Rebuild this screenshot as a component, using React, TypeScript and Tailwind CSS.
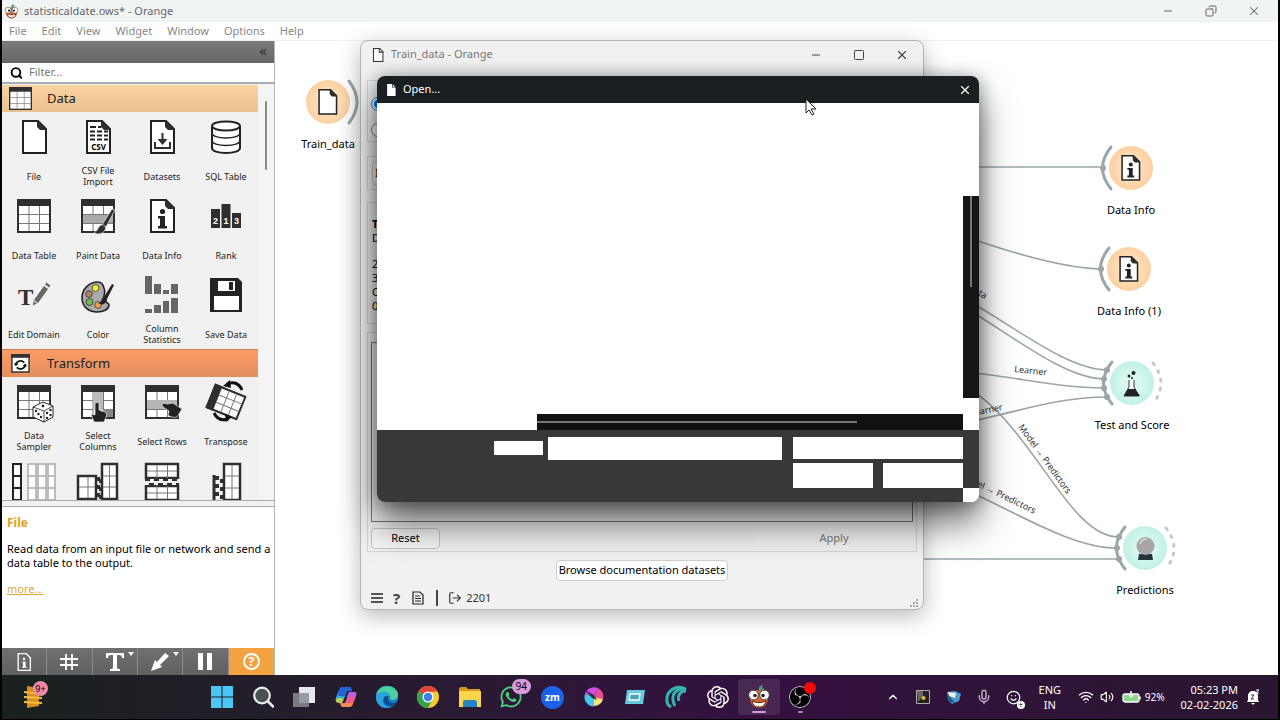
import type { ReactNode } from "react";
import { FaWhatsapp } from "react-icons/fa";
import { SiObsstudio, SiOpenai } from "react-icons/si";
import {
  ChevronUp,
  Copy,
  LogOut,
  Mic,
  Minus,
  Search,
  Smile,
  Square,
  Volume2,
  Wifi,
  X,
} from "lucide-react";

const INK = "#2f2f2f";

/* ---------- widget icons, drawn on a 34 x 34 grid ---------- */

function Icon34({ children }: { children: ReactNode }) {
  return (
    <svg viewBox="0 0 34 34" className="size-[34px] overflow-visible" aria-hidden="true">
      {children}
    </svg>
  );
}

function Page() {
  return (
    <>
      <path d="M6 1h15l8 8v24H6z" fill="#fff" stroke="#222" strokeWidth="2" />
      <path d="M20 0l10 10h-7l-3-3z" fill={INK} />
    </>
  );
}

function Table() {
  return (
    <>
      <rect x="1" y="1" width="32" height="32" fill="#fff" stroke={INK} strokeWidth="2" />
      <path d="M0 0h34v7H0z" fill={INK} />
      <path d="M2 15.5h30M2 24.5h30M12 7v25M22.500 7v25" stroke="#777" fill="none" />
    </>
  );
}

function Info() {
  return (
    <>
      <circle cx="17.500" cy="12.500" r="2.600" fill="#222" />
      <path d="M13 17h7v10h2v2.500h-9V27h2v-7.500h-2z" fill="#222" />
    </>
  );
}

function Brush() {
  return (
    <>
      <path d="M31 10l3 1-9 17-4-2z" fill={INK} stroke="#eee" strokeWidth="0.700" />
      <path d="M20 26c3-1 6 2 4 5-2 4-7 5-11 3 4-2 4-7 7-8z" fill={INK} stroke="#eee" strokeWidth="0.700" />
    </>
  );
}

const icons: Record<string, ReactNode> = {
  file: <Page />,
  csv: (
    <>
      <Page />
      <path
        d="M9 7h6M17 7h3M9 11.500h5M16 11.500h5M23 11.500h4M9 15.500h5M16 15.500h5M23 15.500h4M9 19.500h5M16 19.500h5M23 19.500h4"
        stroke="#222"
        strokeWidth="2"
      />
      <text x="17.500" y="30" textAnchor="middle" fontSize="8" fontWeight="bold" fontFamily="Noto Sans, sans-serif">
        CSV
      </text>
    </>
  ),
  datasets: (
    <>
      <Page />
      <path d="M17.500 13v9M10 22v6h15v-6" stroke={INK} strokeWidth="2" fill="none" />
      <path d="M12.500 19h10l-5 6z" fill={INK} />
    </>
  ),
  sql: (
    <g fill="#fff" stroke="#222" strokeWidth="2">
      <path d="M3 6v22c0 3 6 5 14 5s14-2 14-5V6" />
      <ellipse cx="17" cy="6" rx="14" ry="4.500" />
      <path d="M3 13c0 3 6 5 14 5s14-2 14-5M3 20.500c0 3 6 5 14 5s14-2 14-5" fill="none" strokeWidth="1.400" />
    </g>
  ),
  table: <Table />,
  paint: (
    <>
      <Table />
      <path d="M2 16h30v8H2z" fill="#aaa" />
      <Brush />
    </>
  ),
  info: (
    <>
      <Page />
      <Info />
    </>
  ),
  rank: (
    <>
      <path d="M2 10h9v19H2zM12.500 5h9v24h-9zM23 14h9v15h-9z" fill={INK} />
      <g fill="#fff" fontSize="9" fontWeight="bold" textAnchor="middle" fontFamily="Liberation Sans, sans-serif">
        <text x="6.500" y="25">2</text>
        <text x="17" y="25">1</text>
        <text x="27.500" y="25">3</text>
      </g>
    </>
  ),
  domain: (
    <>
      <text x="1" y="27" fontSize="23" fontWeight="bold" fill={INK} fontFamily="Liberation Serif, serif">
        T
      </text>
      <path d="M27 8l4 3-10 14-4-3zM28 6.500l1.500-2 4 3-1.500 2zM16.500 23l3.500 2.500-4 2z" fill="#666" />
    </>
  ),
  color: (
    <>
      <path
        d="M17 4C8 4 1 11 1 20s7 14 15 14c7 0 12-3 12-7 0-3-4-2-5-5-2-5 3-6 0-12-1-4-3-6-6-6z"
        fill="#aaa"
        stroke="#222"
        strokeWidth="1.600"
      />
      <g stroke="#333" strokeWidth="0.800">
        <circle cx="14.500" cy="10" r="3.500" fill="#eeee28" />
        <circle cx="8" cy="16" r="3.300" fill="#b98166" />
        <circle cx="8.500" cy="24" r="3.500" fill="#6abf45" />
        <circle cx="17" cy="27" r="3.300" fill="#f2a54c" />
      </g>
      <path d="M31 6l2 1-7 14-3-2zM23 19c3 0 4 3 2 5-2 3-5 3-8 1 4 0 3-5 6-6z" fill="#222" />
    </>
  ),
  stats: (
    <path
      d="M0-2h7v18H0zM9 6h7v10H9zM18 12h6v4h-6zM26 6h7v10h-7zM0 31h7v4H0zM9 27h7v8H9zM18 23h6v12h-6zM26 20h7v15h-7z"
      fill="#666"
    />
  ),
  save: (
    <>
      <path d="M1 0h28l4 4v30H1z" fill="#222" />
      <path d="M9 3h17v10H9zM5 18h25v14H5z" fill="#fff" />
      <path d="M20 4h4v8h-4z" fill="#222" />
    </>
  ),
  sampler: (
    <>
      <Table />
      <path d="M16 22l10-5 10 4v11l-9 5-11-5z" fill="#fff" stroke="#222" />
      <path d="M16 22l11 4 9-5M27 26v11" stroke="#222" fill="none" strokeWidth="0.800" />
      <g fill="#222">
        <circle cx="26" cy="21" r="1.400" />
        <circle cx="19" cy="26" r="1.200" />
        <circle cx="24" cy="32" r="1.200" />
        <circle cx="21.500" cy="29" r="1.200" />
        <circle cx="30" cy="28" r="1.200" />
        <circle cx="33.500" cy="30" r="1.200" />
        <circle cx="30" cy="33" r="1.200" />
        <circle cx="33.500" cy="25" r="1.200" />
      </g>
    </>
  ),
  selcols: (
    <>
      <Table />
      <path d="M12 7h10v18H12z" fill="#bbb" />
      <path d="M22 24h10v8H22z" fill="#888" />
      <path
        d="M14 19c0-2 4-2 4 0v6l6 2c2 1 2 3 1 5l-2 5H13l-3-8 4 1z"
        fill="#222"
        stroke="#eee"
        strokeWidth="0.700"
      />
    </>
  ),
  selrows: (
    <>
      <Table />
      <path d="M2 15h30v9H2z" fill="#b5b5b5" />
      <path
        d="M17 20c0-2 3-2 5-1l6-1 9 6-5 8c-3 1-7 0-9-2l1-4-6-4z"
        fill="#222"
        stroke="#eee"
        strokeWidth="0.700"
      />
    </>
  ),
  transpose: (
    <>
      <g transform="rotate(22 17 17)">
        <path d="M1 5h32v24H1z" fill="#fff" stroke={INK} strokeWidth="2" />
        <path d="M0 4h8v26H0z" fill={INK} />
        <path d="M8 13h24M8 21h24M16 6v22M24 6v22" stroke="#777" />
      </g>
      <path d="M18-1c6-3 12-1 15 6M19 34c-6 2-11 0-14-6" stroke="#111" strokeWidth="3" fill="none" />
      <path d="M14 1l7-6 1 8zM23 32l-7-3 1 8z" fill="#111" />
    </>
  ),
  splitcols: (
    <>
      <path d="M-4 0h8v36h-8zM-4 12h8M-4 24h8" fill="#fff" stroke="#222" strokeWidth="2" />
      <path
        d="M11 0h8v36h-8zM11 12h8M11 24h8M21 0h8v36h-8zM21 12h8M21 24h8M31 0h7v36h-7zM31 12h7M31 24h7"
        fill="#fff"
        stroke="#aaa"
        strokeWidth="1.500"
      />
    </>
  ),
  mergea: (
    <>
      <path d="M-3 12h18v23H-3zM21 0h15v35H21z" fill="#fff" stroke={INK} strokeWidth="2.500" />
      <path d="M-2 23h16M7 13v21M22 12h13M22 23h13M28.500 1v33" stroke="#777" />
      <path d="M17 13v23M20 15v20" stroke={INK} strokeWidth="4" strokeDasharray="4 4" />
    </>
  ),
  mergeb: (
    <>
      <path d="M1 0h32v14H1zM1 22h32v14H1z" fill="#fff" stroke={INK} strokeWidth="2.500" />
      <path d="M2 7h30M2 29h30M12 1v34M22.500 1v34" stroke="#777" />
      <path d="M0 18h34" stroke="#f1f1f1" strokeWidth="6" />
      <path d="M0 15.500h34M4 20.500h30" stroke={INK} strokeWidth="3" strokeDasharray="5 4" />
    </>
  ),
  mergec: (
    <>
      <path d="M15 0h16v36H15z" fill="#fff" stroke={INK} strokeWidth="2.500" />
      <path d="M16 12h14M16 24h14M23 1v34" stroke="#777" />
      <path d="M5 11v26" stroke={INK} strokeWidth="3" />
      <path d="M8 12v25M13 15v20" stroke={INK} strokeWidth="4" strokeDasharray="4 4" />
    </>
  ),
};

type Widget = [icon: string, label: string];

const dataWidgets: Widget[] = [
  ["file", "File"],
  ["csv", "CSV File Import"],
  ["datasets", "Datasets"],
  ["sql", "SQL Table"],
  ["table", "Data Table"],
  ["paint", "Paint Data"],
  ["info", "Data Info"],
  ["rank", "Rank"],
  ["domain", "Edit Domain"],
  ["color", "Color"],
  ["stats", "Column Statistics"],
  ["save", "Save Data"],
];

const transformWidgets: Widget[] = [
  ["sampler", "Data Sampler"],
  ["selcols", "Select Columns"],
  ["selrows", "Select Rows"],
  ["transpose", "Transpose"],
  ["splitcols", ""],
  ["mergea", ""],
  ["mergeb", ""],
  ["mergec", ""],
];

function WidgetGrid({ items }: { items: Widget[] }) {
  return (
    <div className="grid grid-cols-4">
      {items.map(([icon, label]) => (
        <button
          key={icon}
          type="button"
          aria-label={label || icon}
          className="flex h-[79px] flex-col items-center pt-2"
        >
          <Icon34>{icons[icon]}</Icon34>
          <span className="mt-2 flex h-7 w-[54px] items-center justify-center text-center text-[9px] leading-[11px] text-[#222]">
            {label}
          </span>
        </button>
      ))}
    </div>
  );
}

function OrangeLogo({ className }: { className: string }) {
  return (
    <svg viewBox="0 0 22 24" className={className} aria-hidden="true">
      <path d="M11 5c-1-3 1-4 4-5l-1 3 3 1-4 2-6-1z" fill="#4d9a6a" />
      <circle cx="11" cy="14" r="9" fill="#d9632b" />
      <circle cx="5.500" cy="10" r="4.800" fill="#fff" stroke="#333" strokeWidth="0.800" />
      <circle cx="16.500" cy="10" r="4.800" fill="#fff" stroke="#333" strokeWidth="0.800" />
      <circle cx="7" cy="10.500" r="1.800" fill="#222" />
      <circle cx="15" cy="10.500" r="1.800" fill="#222" />
      <path d="M4 16c4 2 10 2 14 0-1 5-4 6-7 6s-6-1-7-6z" fill="#fff" stroke="#5a1c10" />
    </svg>
  );
}

function Sidebar() {
  return (
    <aside className="flex w-[273px] shrink-0 flex-col border-r border-[#b5b5b5] bg-[#f1f1f1]">
      <div className="flex h-[22px] shrink-0 items-center justify-end bg-linear-to-b from-[#7b7b7b] to-[#666] pr-[7px]">
        <button type="button" aria-label="Collapse" className="pb-1 text-[15px] leading-none text-[#333]">
          «
        </button>
      </div>
      <label className="flex h-[21px] shrink-0 items-center border-b-2 border-[#a8adb0] bg-white pl-2">
        <Search className="size-3.5 text-black" strokeWidth={3.4} />
        <input
          type="text"
          placeholder="Filter..."
          aria-label="Filter"
          className="ml-1.5 w-full bg-transparent text-[11px] outline-none placeholder:text-[#777]"
        />
      </label>

      <div className="flex min-h-0 flex-1 overflow-hidden border-b border-[#aaa] pt-px">
        <div className="w-64 shrink-0 pr-0">
          <h2 className="flex h-[27px] items-center bg-linear-to-b from-[#fad1a0] to-[#eac391] pl-[7px] text-[13px] text-[#222]">
            <svg viewBox="0 0 34 34" className="mr-[15px] size-[23px]" aria-hidden="true">
              <Table />
            </svg>
            Data
          </h2>
          <WidgetGrid items={dataWidgets} />
          <h2 className="flex h-7 items-center border-t border-[#c98055] bg-linear-to-b from-[#fb9c66] to-[#e38e5c] pl-[9px] text-[13px] text-[#222]">
            <svg viewBox="0 0 20 20" className="mr-[17px] size-[19px]" aria-hidden="true">
              <path d="M1 1h18v18H1z" fill="#fff" stroke="#333" strokeWidth="1.500" />
              <path d="M0 0h20v4H0z" fill="#333" />
              <path d="M5 11c1-4 6-5 9-2M15 12c-1 4-6 5-9 2" stroke="#111" strokeWidth="1.800" fill="none" />
              <path d="M3 10h5l-3 3zM17 13h-5l3-3z" fill="#111" />
            </svg>
            Transform
          </h2>
          <WidgetGrid items={transformWidgets} />
        </div>
        <div className="flex flex-1 justify-center bg-[#f4f4f4] pt-4">
          <div className="h-[69px] w-0.5 rounded bg-[#8a8a8a]" />
        </div>
      </div>

      <div className="h-1.5 shrink-0 border-b border-[#aaa]" />

      <section className="h-[141px] shrink-0 bg-white pl-[5px] pt-2">
        <h3 className="text-[12px] font-bold leading-4 text-[#e0a21a]">File</h3>
        <p className="mt-[11px] text-[11px] leading-[14px] text-black">
          Read data from an input file or network and send a data table to the output.
        </p>
        <a href="#more" className="mt-3 inline-block text-[11px] leading-[14px] text-[#e0a83a] underline">
          more...
        </a>
      </section>

      <div className="grid h-[27px] shrink-0 grid-cols-6 divide-x divide-[#8c8c8c] bg-linear-to-b from-[#707070] to-[#606060] text-white">
        <button type="button" aria-label="Info" className="flex items-center justify-center">
          <svg viewBox="0 0 34 34" className="size-[18px]">
            <path d="M6 1h15l8 8v24H6z" fill="none" stroke="#fff" strokeWidth="2.500" />
            <path d="M14 16h6v10h2v2h-9v-2h2v-8h-1zM15 9h4v4h-4z" fill="#fff" />
          </svg>
        </button>
        <button type="button" aria-label="Grid" className="flex items-center justify-center">
          <svg viewBox="0 0 18 18" className="size-[18px]">
            <path d="M0 6h18M0 12h18M6 1v16M12 1v16" stroke="#fff" strokeWidth="1.800" />
          </svg>
        </button>
        <button type="button" aria-label="Text" className="relative flex items-center justify-center">
          <svg viewBox="0 0 18 18" className="size-[18px]">
            <path d="M0 0h18v5h-2c0-2-1-3-3-3h-2v12c0 2 1 2 3 2v2H4v-2c2 0 3 0 3-2V2H5C3 2 2 3 2 5H0z" fill="#fff" />
          </svg>
          <span className="absolute right-[3px] top-1 border-x-3 border-t-4 border-x-transparent border-t-white" />
        </button>
        <button type="button" aria-label="Arrow" className="relative flex items-center justify-center">
          <svg viewBox="0 0 18 18" className="size-[18px]">
            <path d="M14 0l4 3-9 9 2 2-11 4 4-11 2 2z" fill="#fff" />
          </svg>
          <span className="absolute right-[3px] top-1 border-x-3 border-t-4 border-x-transparent border-t-white" />
        </button>
        <button type="button" aria-label="Pause" className="flex items-center justify-center gap-1">
          <span className="h-[17px] w-[5px] bg-white" />
          <span className="h-[17px] w-[5px] bg-white" />
        </button>
        <button type="button" aria-label="Help" className="flex items-center justify-center bg-[#f2a340]">
          <span className="flex size-[17px] items-center justify-center rounded-full border-2 border-white text-[12px] font-bold leading-none">
            ?
          </span>
        </button>
      </div>
    </aside>
  );
}

/* ---------- workflow canvas ---------- */

type NodeProps = {
  x: number;
  y: number;
  label: string;
  tone: "peach" | "mint";
  input?: boolean;
  output?: "solid" | "dashed";
  children: ReactNode;
};

function WorkflowNode({ x, y, label, tone, input, output, children }: NodeProps) {
  return (
    <div
      className="absolute flex w-24 -translate-x-1/2 flex-col items-center"
      style={{ left: x, top: y - 26 }}
    >
      <svg viewBox="-34 -26 68 52" className="h-[52px] w-[68px] overflow-visible" aria-hidden="true">
        <defs>
          <radialGradient id={`fill-${tone}`}>
            <stop offset="0.4" stopColor={tone === "peach" ? "#ffe0bd" : "#d8f8f0"} />
            <stop offset="1" stopColor={tone === "peach" ? "#fcd0a0" : "#c0f1e6"} />
          </radialGradient>
        </defs>
        <circle r="22" fill={`url(#fill-${tone})`} />
        {input && <path d="M-20-21Q-37 0-20 21" stroke="#9ba6aa" strokeWidth="3" strokeLinecap="round" fill="none" />}
        {output === "solid" && (
          <path d="M21-21Q37 0 21 21" stroke="#9ba6aa" strokeWidth="3" strokeLinecap="round" fill="none" />
        )}
        {output === "dashed" && (
          <path
            d="M21-20Q37 0 21 21"
            stroke="#c6c9ca"
            strokeWidth="3"
            strokeLinecap="round"
            strokeDasharray="2 7"
            fill="none"
          />
        )}
        {children}
      </svg>
      <span className="mt-2 whitespace-nowrap text-[11px] leading-4 text-black">{label}</span>
    </div>
  );
}

function SmallPage({ info }: { info?: boolean }) {
  return (
    <g transform="translate(-13.500 -13) scale(0.76)">
      <Page />
      {info && <Info />}
    </g>
  );
}

const links = [
  "M645 126H828",
  "M645 179C710 204 780 227 826 228",
  "M680 252C740 285 790 328 832 329",
  "M680 260C745 300 790 337 829 338",
  "M680 330C740 335 780 347 829 347",
  "M680 384C740 372 780 356 832 356",
  "M680 340C755 373 790 496 844 496",
  "M680 444C740 470 795 507 842 507",
  "M600 518H844",
];

const sockets = [
  [828, 127],
  [826, 228],
  [832, 329],
  [829, 338],
  [829, 347],
  [832, 356],
  [844, 496],
  [842, 507],
  [844, 518],
];

function Canvas() {
  return (
    <main className="relative flex-1 overflow-hidden bg-white">
      <svg className="absolute inset-0 size-full" aria-hidden="true">
        <g fill="none" stroke="#9ba4a7" strokeWidth="1.600">
          {links.map((d) => (
            <path key={d} d={d} />
          ))}
        </g>
        {sockets.map(([cx, cy]) => (
          <circle key={`${cx}-${cy}`} cx={cx} cy={cy} r="3" fill="#9ba6aa" />
        ))}
        <g fontSize="9" fill="#333">
          <text transform="translate(710 258) rotate(28)" textAnchor="end">Data</text>
          <text transform="translate(739 331) rotate(6)">Learner</text>
          <text transform="translate(728 369) rotate(-11)" textAnchor="end">Learner</text>
          <text transform="translate(743 386) rotate(54)">Model → Predictors</text>
          <text transform="translate(759 473) rotate(26)" textAnchor="end">Model → Predictors</text>
        </g>
      </svg>

      <WorkflowNode x={53} y={61} label="Train_data" tone="peach" output="solid">
        <SmallPage />
      </WorkflowNode>
      <WorkflowNode x={856} y={127} label="Data Info" tone="peach" input>
        <SmallPage info />
      </WorkflowNode>
      <WorkflowNode x={854} y={228} label="Data Info (1)" tone="peach" input>
        <SmallPage info />
      </WorkflowNode>
      <WorkflowNode x={857} y={342} label="Test and Score" tone="mint" input output="dashed">
        <path d="M-3-3v7l-5 9h15l-5-9v-7" fill="#fff" stroke="#333" />
        <path d="M-4 6H3l5 7H-8z" fill="#222" />
        <circle cx="-3" cy="-7" r="1.500" fill="#222" />
        <circle cx="1.500" cy="-10" r="2" fill="#222" />
        <circle cx="0" cy="-5" r="1" fill="#222" />
      </WorkflowNode>
      <WorkflowNode x={870} y={507} label="Predictions" tone="mint" input output="dashed">
        <path d="M-6 6H7l1 6H-7z" fill="#263338" />
        <circle cx="0.500" cy="-2" r="9" fill="#a9a4a6" />
        <path d="M-5-4c1-4 4-5 7-5" stroke="#ddd" strokeWidth="1.500" fill="none" />
      </WorkflowNode>
    </main>
  );
}

/* ---------- floating windows ---------- */

function TrainDataWindow() {
  return (
    <section
      aria-label="Train_data"
      className="absolute left-[358px] top-[40px] flex w-[564px] flex-col rounded-lg border border-[#b4b4b4] bg-[#f1f1f1] shadow-[0_6px_22px_rgba(0,0,0,0.28)]"
    >
      <header className="flex h-[27px] items-center pl-2.5">
        <svg viewBox="0 0 34 34" className="size-3.5" aria-hidden="true">
          <path d="M6 1h15l8 8v24H6z" fill="#fff" stroke="#333" strokeWidth="2.500" />
          <path d="M20 0v10h10" fill="none" stroke="#333" strokeWidth="2.500" />
        </svg>
        <span className="ml-1.5 flex-1 text-[11px] text-[#777]">Train_data - Orange</span>
        <button type="button" aria-label="Minimize" className="flex w-[43px] justify-center text-[#444]">
          <Minus className="size-3" strokeWidth={2} />
        </button>
        <button type="button" aria-label="Maximize" className="flex w-[43px] justify-center text-[#444]">
          <Square className="size-3" strokeWidth={2} />
        </button>
        <button type="button" aria-label="Close" className="flex w-[43px] justify-center text-[#444]">
          <X className="size-3.5" strokeWidth={2} />
        </button>
      </header>

      <div className="flex flex-col px-1.5 pt-3 text-[11px]">
        <div className="flex h-[62px] flex-col gap-3 border border-[#d5d5d5] pl-[3px] pt-4">
          <input type="radio" name="source" aria-label="File" defaultChecked className="size-3.5" />
          <input type="radio" name="source" aria-label="URL" className="size-3.5" />
        </div>
        <div className="mt-3.5 h-[34px] border border-[#d5d5d5] p-1">
          <button type="button" aria-label="File type" className="h-6 w-24 rounded border border-[#c8c8c8] bg-[#f8f8f8] pl-0.5 text-left">
            I
          </button>
        </div>
        <div className="mt-3 h-[122px] border border-[#d5d5d5] pl-1 pt-3.5 leading-[14px]">
          <p className="font-bold">T</p>
          <p>D</p>
          <p className="mt-3">2</p>
          <p>3</p>
          <p>C</p>
          <p>0</p>
        </div>
        <div className="mt-2 border border-[#d5d5d5] px-[3px] pb-0.5 pt-[9px]">
          <div className="h-[180px] border border-[#777]" />
          <div className="mt-1.5 flex justify-between">
            <button type="button" className="h-[21px] w-[69px] rounded border border-[#c4c4c4] bg-[#f8f8f8]/70">
              Reset
            </button>
            <button type="button" disabled className="h-[21px] w-[158px] bg-[#f4f4f4]/50 text-[#777]">
              Apply
            </button>
          </div>
        </div>
        <button
          type="button"
          className="mt-2 h-[21px] self-center whitespace-nowrap rounded border border-[#cfcfcf] bg-white px-0.5"
        >
          Browse documentation datasets
        </button>
      </div>

      <footer className="mt-1.5 flex h-[22px] items-center pl-2.5 text-[11px] text-[#333]">
        <svg viewBox="0 0 12 12" className="size-3" aria-hidden="true">
          <path d="M0 2h12M0 6h12M0 10h12" stroke="#222" strokeWidth="1.600" />
        </svg>
        <span className="ml-2.5 text-[15px] font-bold leading-none text-[#444]">?</span>
        <svg viewBox="0 0 12 14" className="ml-3 h-3.5 w-3" aria-hidden="true">
          <path d="M1 1h7l3 3v9H1z" fill="none" stroke="#222" strokeWidth="1.200" />
          <path d="M3 5h5M3 7.500h6M3 10h6" stroke="#222" />
        </svg>
        <span className="ml-3 h-4 w-0.5 bg-[#444]" />
        <LogOut className="ml-2.5 size-3.5" strokeWidth={2} />
        <span className="ml-1">2201</span>
        <svg viewBox="0 0 9 9" className="ml-auto mr-1 mt-2.5 size-[9px]" aria-hidden="true">
          <path d="M6 0h2v2H6zM6 3h2v2H6zM6 6h2v2H6zM3 3h2v2H3zM3 6h2v2H3zM0 6h2v2H0z" fill="#aaa" />
        </svg>
      </footer>
    </section>
  );
}

function OpenDialog() {
  return (
    <section
      role="dialog"
      aria-label="Open"
      className="absolute left-[375px] top-[76px] w-[602px] overflow-hidden rounded-lg bg-white shadow-[0_22px_36px_rgba(0,0,0,0.55),0_2px_18px_rgba(0,0,0,0.4)]"
    >
      <header className="flex h-[27px] items-center bg-[#1a1f21] pl-2 pr-[7px] text-white">
        <svg viewBox="0 0 34 34" className="size-3" aria-hidden="true">
          <path d="M6 0h14v10h10v24H6zM22 1l7 7h-7z" fill="#fff" />
        </svg>
        <span className="ml-1.5 flex-1 text-[11px]">Open...</span>
        <button type="button" aria-label="Close">
          <X className="size-3.5" strokeWidth={2} />
        </button>
      </header>
      <div className="flex">
        <div className="flex flex-1 flex-col">
          <div className="h-[311px] bg-white" />
          <div className="ml-40 flex h-4 items-center bg-[#111]">
            <div className="h-0.5 w-3/4 bg-[#777]" />
          </div>
          <div className="flex h-[72px] items-start justify-end bg-[#383838] pt-[7px]">
            <label htmlFor="file-name" className="mr-[5px] mt-1 h-3.5 w-[49px] bg-white" />
            <input id="file-name" type="text" aria-label="File name" className="mr-[11px] h-[23px] w-[234px] bg-white" />
            <div className="flex w-[170px] flex-col gap-1">
              <select aria-label="File type" className="h-[22px] appearance-none bg-white" />
              <div className="flex gap-2.5">
                <button type="button" aria-label="Open" className="h-[25px] flex-1 bg-white" />
                <button type="button" aria-label="Cancel" className="h-[25px] flex-1 bg-white" />
              </div>
            </div>
          </div>
        </div>
        <div className="flex w-4 flex-col">
          <div className="h-[93px] bg-white" />
          <div className="flex h-[202px] justify-center bg-[#151515]">
            <div className="h-[91px] w-0.5 bg-[#777]" />
          </div>
          <div className="h-8 bg-white" />
          <div className="h-[58px] bg-[#383838]" />
          <div className="h-3.5 bg-white" />
        </div>
      </div>
    </section>
  );
}

/* ---------- taskbar ---------- */

const taskIcons: [string, ReactNode][] = [
  [
    "Start",
    <svg viewBox="0 0 22 22" className="size-[22px]">
      <path d="M0 0h10.500v10.500H0zM11.500 0H22v10.500H11.500zM0 11.500h10.500V22H0zM11.500 11.500H22V22H11.500z" fill="#4cc6f5" />
    </svg>,
  ],
  [
    "Search",
    <svg viewBox="0 0 22 22" className="size-[22px]">
      <circle cx="10" cy="9.500" r="7.800" fill="#4a5154" stroke="#e8ecee" strokeWidth="2.200" />
      <path d="M16 15.500l5 5" stroke="#e8ecee" strokeWidth="2.500" strokeLinecap="round" />
    </svg>,
  ],
  [
    "Task view",
    <svg viewBox="0 0 24 22" className="h-[22px] w-6">
      <path d="M7 1h16v16H7z" fill="#e8e8ec" />
      <path d="M1 7h16v14H1z" fill="#888c90" fillOpacity="0.85" />
    </svg>,
  ],
  [
    "Copilot",
    <svg viewBox="0 0 22 22" className="size-[22px]">
      <path d="M8 1h6c2 0 2 2 3 4h-5L8 16H3c-4 0-2-4-1-7l2-5c1-2 2-3 4-3z" fill="#2da9e8" />
      <path d="M8 1h6c2 0 2 2 3 4h-5l-2 5H3l1-6c1-2 2-3 4-3z" fill="#2563d9" />
      <path d="M2 12h6l-1 5H4c-4 0-3-3-2-5z" fill="#c4cf45" />
      <path d="M14 21H8c-2 0-2-2-3-4h5l4-11h5c4 0 2 4 1 7l-2 5c-1 2-2 3-4 3z" fill="#ef5a87" />
      <path d="M14 6h5c3 0 2 3 1 5h-8z" fill="#b263e8" />
      <path d="M10 17h8c-1 3-2 4-4 4H8c-2 0-2-2-3-4z" fill="#f58a4c" />
    </svg>,
  ],
  [
    "Edge",
    <svg viewBox="0 0 24 24" className="size-6">
      <circle cx="12" cy="12" r="11" fill="#1a7fd0" />
      <path d="M1 11C2 4 7 1 12 1c7 0 12 5 11 10-1 4-6 5-8 3 1-5-3-7-6-7-4 0-7 2-8 4z" fill="#4bd0a0" />
      <path d="M1 12c1-4 5-6 9-5 3 1 4 3 4 5-1-1-5-1-6 3s3 8 8 7c-7 3-15-1-15-10z" fill="#2aa4dd" />
      <path d="M9 12c-2 5 2 9 7 9 3 0 5-2 6-4-4 2-8 1-9-2-1-2 1-3 0-4-1 0-3 0-4 1z" fill="#0d4b8d" />
    </svg>,
  ],
  [
    "Chrome",
    <svg viewBox="0 0 24 24" className="size-6">
      <circle cx="12" cy="12" r="11" fill="#f8c92c" />
      <path d="M12 12L2.500 6.500A11 11 0 0 1 21.500 6.500L12 7z" fill="#e0443a" />
      <path d="M2.500 6.500A11 11 0 0 0 12 23l4.500-8.500L12 12z" fill="#34a150" />
      <circle cx="12" cy="12" r="5.500" fill="#fff" />
      <circle cx="12" cy="12" r="4.300" fill="#3d7fe8" />
    </svg>,
  ],
  [
    "Explorer",
    <svg viewBox="0 0 24 22" className="h-[22px] w-6">
      <path d="M1 3c0-1 1-2 2-2h5l2 2h12v6H1z" fill="#d99a1c" />
      <path d="M1 5h22v16H1z" fill="#fbd54a" />
      <path d="M5 21v-5c0-1 1-2 2-2h10c1 0 2 1 2 2v5z" fill="#2384c6" />
    </svg>,
  ],
  [
    "WhatsApp",
    <span className="relative">
      <FaWhatsapp className="size-6 text-[#43d979]" />
      <span className="absolute -right-2 -top-1.5 rounded-full bg-[#d89be0] px-1 text-[10px] leading-[15px] text-black">94</span>
    </span>,
  ],
  [
    "Zoom",
    <span className="flex size-[23px] items-center justify-center rounded-full bg-[#1b62e8] text-[10px] font-bold text-white">
      zm
    </span>,
  ],
  [
    "Krita",
    <svg viewBox="0 0 20 20" className="size-5">
      <path d="M10 10L1 7a9.500 9.500 0 0 1 13-6z" fill="#d04be8" />
      <path d="M10 10l4-9a9.500 9.500 0 0 1 5 11z" fill="#ed4b9a" />
      <path d="M10 10l9 2a9.500 9.500 0 0 1-9 7z" fill="#f4e27b" />
      <path d="M10 10v9.500A9.500 9.500 0 0 1 1 7z" fill="#45c8f0" />
      <path d="M1 3l9 5 3 5-5-2z" fill="#333" />
    </svg>,
  ],
  [
    "Window",
    <svg viewBox="0 0 20 14" className="h-3.5 w-5">
      <path d="M2 0h18l-2 14H0z" fill="#67c9dd" />
      <path d="M5 4h10l-1 6H4z" fill="#4aa3bd" stroke="#fff" strokeWidth="1.400" />
    </svg>,
  ],
  [
    "Shell",
    <svg viewBox="0 0 24 24" className="size-6">
      <g fill="none" stroke="#35b3b0" strokeWidth="3">
        <path d="M22 4C12-1 2 6 3 16c0 3 2 5 4 6" />
        <path d="M22 5C14 2 8 8 9 15c0 2 1 4 2 6" />
        <path d="M22 6c-6 0-9 5-7 10" />
      </g>
    </svg>,
  ],
  ["ChatGPT", <SiOpenai className="size-[22px] text-white" />],
  ["Orange", <OrangeLogo className="h-6 w-[22px]" />],
  [
    "OBS",
    <span className="relative">
      <SiObsstudio className="size-[22px] rounded-full bg-black text-[#c9c9c9]" />
      <span className="absolute -right-[5px] -top-1 size-3 rounded-full bg-[#f40808]" />
    </span>,
  ],
];

function Taskbar() {
  return (
    <footer className="flex h-[45px] shrink-0 items-center border-b border-black bg-linear-to-r from-[#19211f] via-[#341040] via-60% to-[#2a1630] text-white">
      <div className="w-[199px] shrink-0 pl-[21px]">
        <button type="button" aria-label="Widgets" className="relative flex">
          <svg viewBox="0 0 20 24" className="h-6 w-5">
            <path d="M4 1l12 2v18L4 23z" fill="#d98c1f" />
            <path d="M1 7l18 2M1 12l18 1M1 17l18 1" stroke="#f8bc40" strokeWidth="2" />
          </svg>
          <span className="absolute -top-1 left-2.5 flex size-[15px] items-center justify-center rounded-full bg-[#ef88a8] text-[9px] text-black">
            9+
          </span>
        </button>
      </div>
      <nav aria-label="Taskbar" className="grid h-full w-[620px] shrink-0 grid-cols-15">
        {taskIcons.map(([name, icon]) => (
          <button
            key={name}
            type="button"
            aria-label={name}
            className={`relative my-1 flex items-center justify-center rounded ${name === "Orange" ? "bg-white/10" : ""}`}
          >
            {icon}
            {name === "Orange" && <span className="absolute bottom-0.5 h-0.5 w-3.5 rounded bg-[#d49be0]" />}
            {name === "OBS" && <span className="absolute bottom-0.5 h-0.5 w-[5px] rounded bg-[#a98bb0]" />}
          </button>
        ))}
      </nav>
      <div className="ml-auto flex items-center pr-[18px]">
        <ChevronUp className="size-3.5" />
        <svg viewBox="0 0 14 14" className="ml-4 size-3.5" aria-hidden="true">
          <path d="M.5.5h13v13H.500z" fill="#222" stroke="#aaa" />
          <path d="M1 1h6v5L2 12z" fill="#666" />
          <circle cx="7.500" cy="8" r="2" fill="#e3c02e" />
        </svg>
        <svg viewBox="0 0 16 16" className="ml-4 size-4" aria-hidden="true">
          <path d="M1 3l8-1 6 3-2 7-7 3-4-4z" fill="#4a9bd4" />
          <path d="M2 3l8 1-1 5-6-2z" fill="#f0efe0" />
          <path d="M1 4l2 9 6 1z" fill="#1c5c87" />
        </svg>
        <Mic className="ml-3.5 size-4 text-[#cbbccd]" />
        <span className="relative ml-3.5">
          <Smile className="size-[15px]" />
          <span className="absolute -bottom-1 -right-1 flex size-2 items-center justify-center rounded-full bg-white text-[8px] leading-none text-black">
            +
          </span>
        </span>
        <span className="ml-[17px] w-6 text-center text-[11px] leading-[15px]">
          ENG
          <br />
          IN
        </span>
        <Wifi className="ml-4 size-4" />
        <Volume2 className="ml-1.5 size-3.5" />
        <svg viewBox="0 0 19 12" className="ml-2 h-3 w-[19px]" aria-hidden="true">
          <rect x="1" y="3" width="16" height="8" rx="2" fill="#8fd68f" stroke="#fff" strokeWidth="1.300" />
          <path d="M18 5.500v3M9 0v6" stroke="#fff" strokeWidth="1.500" />
          <path d="M6.500 4h5L9 7z" fill="#fff" />
        </svg>
        <span className="ml-1 text-[10px]">92%</span>
        <span className="ml-4 whitespace-nowrap text-right text-[11px] leading-[15px]">
          05:23 PM
          <br />
          02-02-2026
        </span>
        <svg viewBox="0 0 14 16" className="ml-2 h-4 w-3.5" aria-hidden="true">
          <path d="M2 11V7c0-3 2-5 5-5s5 2 5 5v4l1 2H1zM5 14h4l-2 2z" fill="#fff" />
          <path d="M5 6h3l-3 4h3" stroke="#333" fill="none" />
          <path d="M10 1h3l-3 3h3" stroke="#fff" fill="none" />
        </svg>
      </div>
    </footer>
  );
}

const menus = ["File", "Edit", "View", "Widget", "Window", "Options", "Help"];

export default function App() {
  return (
    <div className="relative flex h-screen flex-col overflow-hidden border-x-2 border-black bg-white font-['Noto_Sans','Liberation_Sans',sans-serif]">
      <header className="flex h-[22px] shrink-0 items-center bg-[#f1f4f5] pl-0.5 pr-[3px]">
        <OrangeLogo className="size-[15px]" />
        <h1 className="ml-[5px] flex-1 text-[11px] text-[#666]">statisticaldate.ows* - Orange</h1>
        <button type="button" aria-label="Minimize" className="flex w-[43px] justify-center text-[#666]">
          <Minus className="size-3" strokeWidth={2} />
        </button>
        <button type="button" aria-label="Restore" className="flex w-[43px] justify-center text-[#666]">
          <Copy className="size-3 -scale-x-100" strokeWidth={2} />
        </button>
        <button type="button" aria-label="Close" className="flex w-[43px] justify-center text-[#666]">
          <X className="size-3.5" strokeWidth={1.8} />
        </button>
      </header>
      <nav aria-label="Menu" className="flex h-[19px] shrink-0 items-center gap-[15px] border-b border-[#f0f0f0] pl-[7px] text-[11px] text-[#888]">
        {menus.map((menu) => (
          <button key={menu} type="button">
            {menu}
          </button>
        ))}
      </nav>
      <div className="flex min-h-0 flex-1">
        <Sidebar />
        <Canvas />
      </div>
      <Taskbar />

      <TrainDataWindow />
      <OpenDialog />

      <svg viewBox="0 0 12 18" className="absolute left-[803px] top-[98px] h-[18px] w-3" aria-hidden="true">
        <path d="M1 1v14l3-3 3 5 2-1-3-5h5z" fill="#fff" stroke="#222" />
      </svg>
    </div>
  );
}
